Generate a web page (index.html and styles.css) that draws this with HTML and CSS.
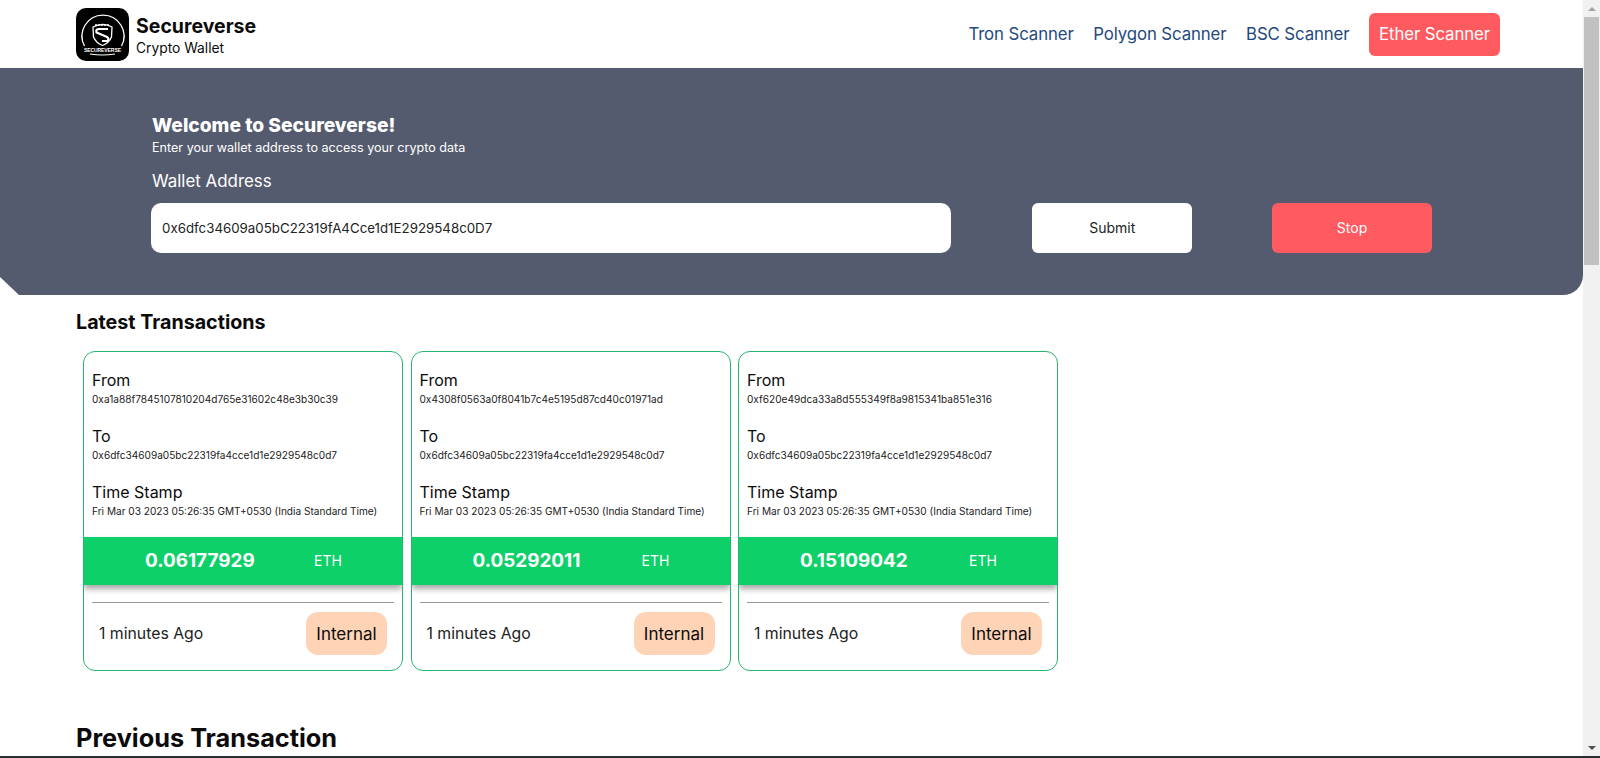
FILE: index.html
```html
<!DOCTYPE html>
<html lang="en">
<head>
	<meta charset="UTF-8">
	<title>Secureverse</title>
	<link rel="stylesheet" href="styles.css">
</head>
<body>
	<div class="screen">
		<div class="page">
			<div class="nav">
				<div class="brand">
					<svg class="logo" viewBox="0 0 53 53" width="53" height="53">
						<rect width="53" height="53" rx="10" fill="#000"/>
						<path d="M8.5 38A21 21 0 1 1 45.500 38" fill="none" stroke="#fff" stroke-width="1.3"/>
						<path d="M17 19Q27 14 36 19L35.500 29Q33 35 26.500 37.500Q20 35 17.500 29Z" fill="none" stroke="#fff" stroke-width="1.3"/>
						<path d="M19 17H34" fill="none" stroke="#fff" stroke-width="1.5" stroke-dasharray="2 1"/>
						<path d="M32 21H23Q19.500 21 20.500 24.500L31 29Q33.500 30.500 31.500 33H26" fill="none" stroke="#fff" stroke-width="2.2"/>
						<text class="logo-text" x="26.500" y="44" text-anchor="middle" textLength="37">SECUREVERSE</text>
						<path d="M14 46Q26.500 48 39 46" fill="none" stroke="#fff" stroke-width="1.100"/>
					</svg>
					<div class="brand-text">
						<div class="brand-name">Secureverse</div>
						<div class="brand-sub">Crypto Wallet</div>
					</div>
				</div>
				<div class="links">
					<a class="link">Tron Scanner</a>
					<a class="link">Polygon Scanner</a>
					<a class="link">BSC Scanner</a>
					<a class="link active">Ether Scanner</a>
				</div>
			</div>

			<div class="hero">
				<h1>Welcome to Secureverse!</h1>
				<p class="hero-sub">Enter your wallet address to access your crypto data</p>
				<label class="hero-label">Wallet Address</label>
				<div class="hero-form">
					<div class="address">0x6dfc34609a05bC22319fA4Cce1d1E2929548c0D7</div>
					<button class="btn submit">Submit</button>
					<button class="btn stop">Stop</button>
				</div>
			</div>

			<div class="content">
				<h2 class="latest-title">Latest Transactions</h2>
				<div class="cards">
					<div class="card">
						<div class="info">
							<div class="label">From</div>
							<div class="value">0xa1a88f7845107810204d765e31602c48e3b30c39</div>
							<div class="label">To</div>
							<div class="value">0x6dfc34609a05bc22319fa4cce1d1e2929548c0d7</div>
							<div class="label">Time Stamp</div>
							<div class="value">Fri Mar 03 2023 05:26:35 GMT+0530 (India Standard Time)</div>
						</div>
						<div class="amount"><span class="num">0.06177929</span><span class="coin">ETH</span></div>
						<div class="foot">
							<span class="ago">1 minutes Ago</span>
							<span class="badge">Internal</span>
						</div>
					</div>
					<div class="card">
						<div class="info">
							<div class="label">From</div>
							<div class="value">0x4308f0563a0f8041b7c4e5195d87cd40c01971ad</div>
							<div class="label">To</div>
							<div class="value">0x6dfc34609a05bc22319fa4cce1d1e2929548c0d7</div>
							<div class="label">Time Stamp</div>
							<div class="value">Fri Mar 03 2023 05:26:35 GMT+0530 (India Standard Time)</div>
						</div>
						<div class="amount"><span class="num">0.05292011</span><span class="coin">ETH</span></div>
						<div class="foot">
							<span class="ago">1 minutes Ago</span>
							<span class="badge">Internal</span>
						</div>
					</div>
					<div class="card">
						<div class="info">
							<div class="label">From</div>
							<div class="value">0xf620e49dca33a8d555349f8a9815341ba851e316</div>
							<div class="label">To</div>
							<div class="value">0x6dfc34609a05bc22319fa4cce1d1e2929548c0d7</div>
							<div class="label">Time Stamp</div>
							<div class="value">Fri Mar 03 2023 05:26:35 GMT+0530 (India Standard Time)</div>
						</div>
						<div class="amount"><span class="num">0.15109042</span><span class="coin">ETH</span></div>
						<div class="foot">
							<span class="ago">1 minutes Ago</span>
							<span class="badge">Internal</span>
						</div>
					</div>
				</div>
				<h2 class="prev-title">Previous Transaction</h2>
			</div>
		</div>

		<div class="scrollbar">
			<div class="arrow up"></div>
			<div class="thumb"></div>
			<div class="track"></div>
			<div class="arrow down"></div>
		</div>
	</div>
</body>
</html>
```

FILE: styles.css
```css
*{
	margin: 0;
	padding: 0;
	box-sizing: border-box;
}
html,body{
	height: 100%;
	overflow: hidden;
}
body{
	background: #fff;
	color: #0b0b0b;
	font-family: "Inter", "Noto Sans", sans-serif;
}
.screen{
	display: flex;
	height: 758px;
	border-bottom: 2px solid #2b2f33;
}
.page{
	flex: 1;
	min-width: 0;
	overflow: hidden;
}

/* nav */
.nav{
	display: flex;
	justify-content: space-between;
	align-items: center;
	height: 68px;
	padding: 0 83px 0 76px;
}
.brand{
	display: flex;
	align-items: center;
	gap: 7px;
}
.logo{
	display: block;
}
.logo-text{
	font-family: "Liberation Sans", sans-serif;
	font-size: 5px;
	font-weight: 700;
	fill: #fff;
}
.brand-name{
	font-size: 19.5px;
	font-weight: 700;
	line-height: 28px;
	margin-bottom: -1px;
}
.brand-sub{
	font-size: 13.8px;
	line-height: 18px;
}
.links{
	display: flex;
	align-items: center;
	gap: 19.5px;
}
.link{
	font-size: 16.8px;
	line-height: 43px;
	color: #1f4a7c;
	letter-spacing: -0.1px;
}
.active{
	width: 131px;
	text-align: center;
	color: #fff;
	background: #ff5a5f;
	border-radius: 6px;
}

/* hero */
.hero{
	position: relative;
	height: 227px;
	padding: 44px 151px 0 151px;
	background: #555b6e;
	color: #fff;
	border-bottom-right-radius: 20px;
}
.hero::before{
	content: "";
	position: absolute;
	left: 0;
	bottom: 0;
	width: 19px;
	height: 18px;
	background: #fff;
	clip-path: polygon(0 0, 100% 100%, 0 100%);
}
.hero h1{
	font-size: 19.2px;
	font-weight: 800;
	line-height: 26px;
	padding-left: 1px;
}
.hero-sub{
	font-size: 12.6px;
	line-height: 20px;
	padding-left: 1px;
}
.hero-label{
	display: block;
	margin-top: 11px;
	padding-left: 1px;
	font-size: 16.9px;
	line-height: 24px;
}
.hero-form{
	display: flex;
	margin-top: 10px;
}
.address{
	width: 801px;
	height: 50px;
	padding-left: 11px;
	margin-right: 81px;
	background: #fff;
	color: #222;
	border-radius: 10px;
	font-size: 13.3px;
	line-height: 50px;
}
.btn{
	width: 160px;
	height: 50px;
	padding-bottom: 2px;
	border: 0;
	border-radius: 6px;
	font-family: inherit;
	font-size: 14px;
}
.submit{
	margin-right: 80px;
	background: #fff;
	color: #222;
}
.stop{
	background: #ff5a5f;
	color: #fff;
}

/* transactions */
.content{
	padding: 0 76px;
}
.latest-title{
	font-size: 19.7px;
	font-weight: 700;
	line-height: 27px;
	margin-top: 14px;
}
.cards{
	display: flex;
	gap: 7.5px;
	margin: 15px 0 0 7px;
}
.card{
	width: 320px;
	height: 320px;
	border: 1px solid #25b56f;
	border-radius: 12px;
	overflow: hidden;
}
.info{
	height: 185px;
	padding: 16px 8px 0;
}
.label{
	font-size: 16px;
	line-height: 24px;
}
.value{
	font-size: 10.1px;
	line-height: 15px;
	color: #222;
	margin-bottom: 17px;
	white-space: nowrap;
}
.amount{
	display: flex;
	align-items: center;
	height: 48px;
	padding-bottom: 2px;
	background: #0dd068;
	color: #fff;
	box-shadow: 0 4px 6px rgba(0,0,0,0.35);
}
.num{
	width: 230px;
	padding-left: 61px;
	font-size: 18.9px;
	font-weight: 700;
}
.coin{
	font-size: 14px;
}
.foot{
	display: flex;
	justify-content: space-between;
	align-items: center;
	margin: 17px 8px 0;
	padding: 9px 7px 0;
	border-top: 1px solid #999;
}
.ago{
	font-size: 15.8px;
	color: #222;
}
.badge{
	width: 81px;
	height: 43px;
	background: #ffd3b6;
	border-radius: 12px;
	font-size: 17px;
	line-height: 44px;
	text-align: center;
}
.prev-title{
	font-size: 25.3px;
	font-weight: 700;
	line-height: 36px;
	margin-top: 49px;
}

/* scrollbar */
.scrollbar{
	display: flex;
	flex-direction: column;
	width: 17px;
	background: #f1f1f1;
}
.arrow{
	height: 17px;
	display: flex;
	align-items: center;
	justify-content: center;
}
.arrow::before{
	content: "";
	border-left: 4px solid transparent;
	border-right: 4px solid transparent;
}
.up::before{
	border-bottom: 4px solid #a3a3a3;
}
.down::before{
	border-top: 4px solid #505050;
}
.thumb{
	height: 248px;
	margin: 0 1px;
	background: #c1c1c1;
}
.track{
	flex: 1;
}
```
